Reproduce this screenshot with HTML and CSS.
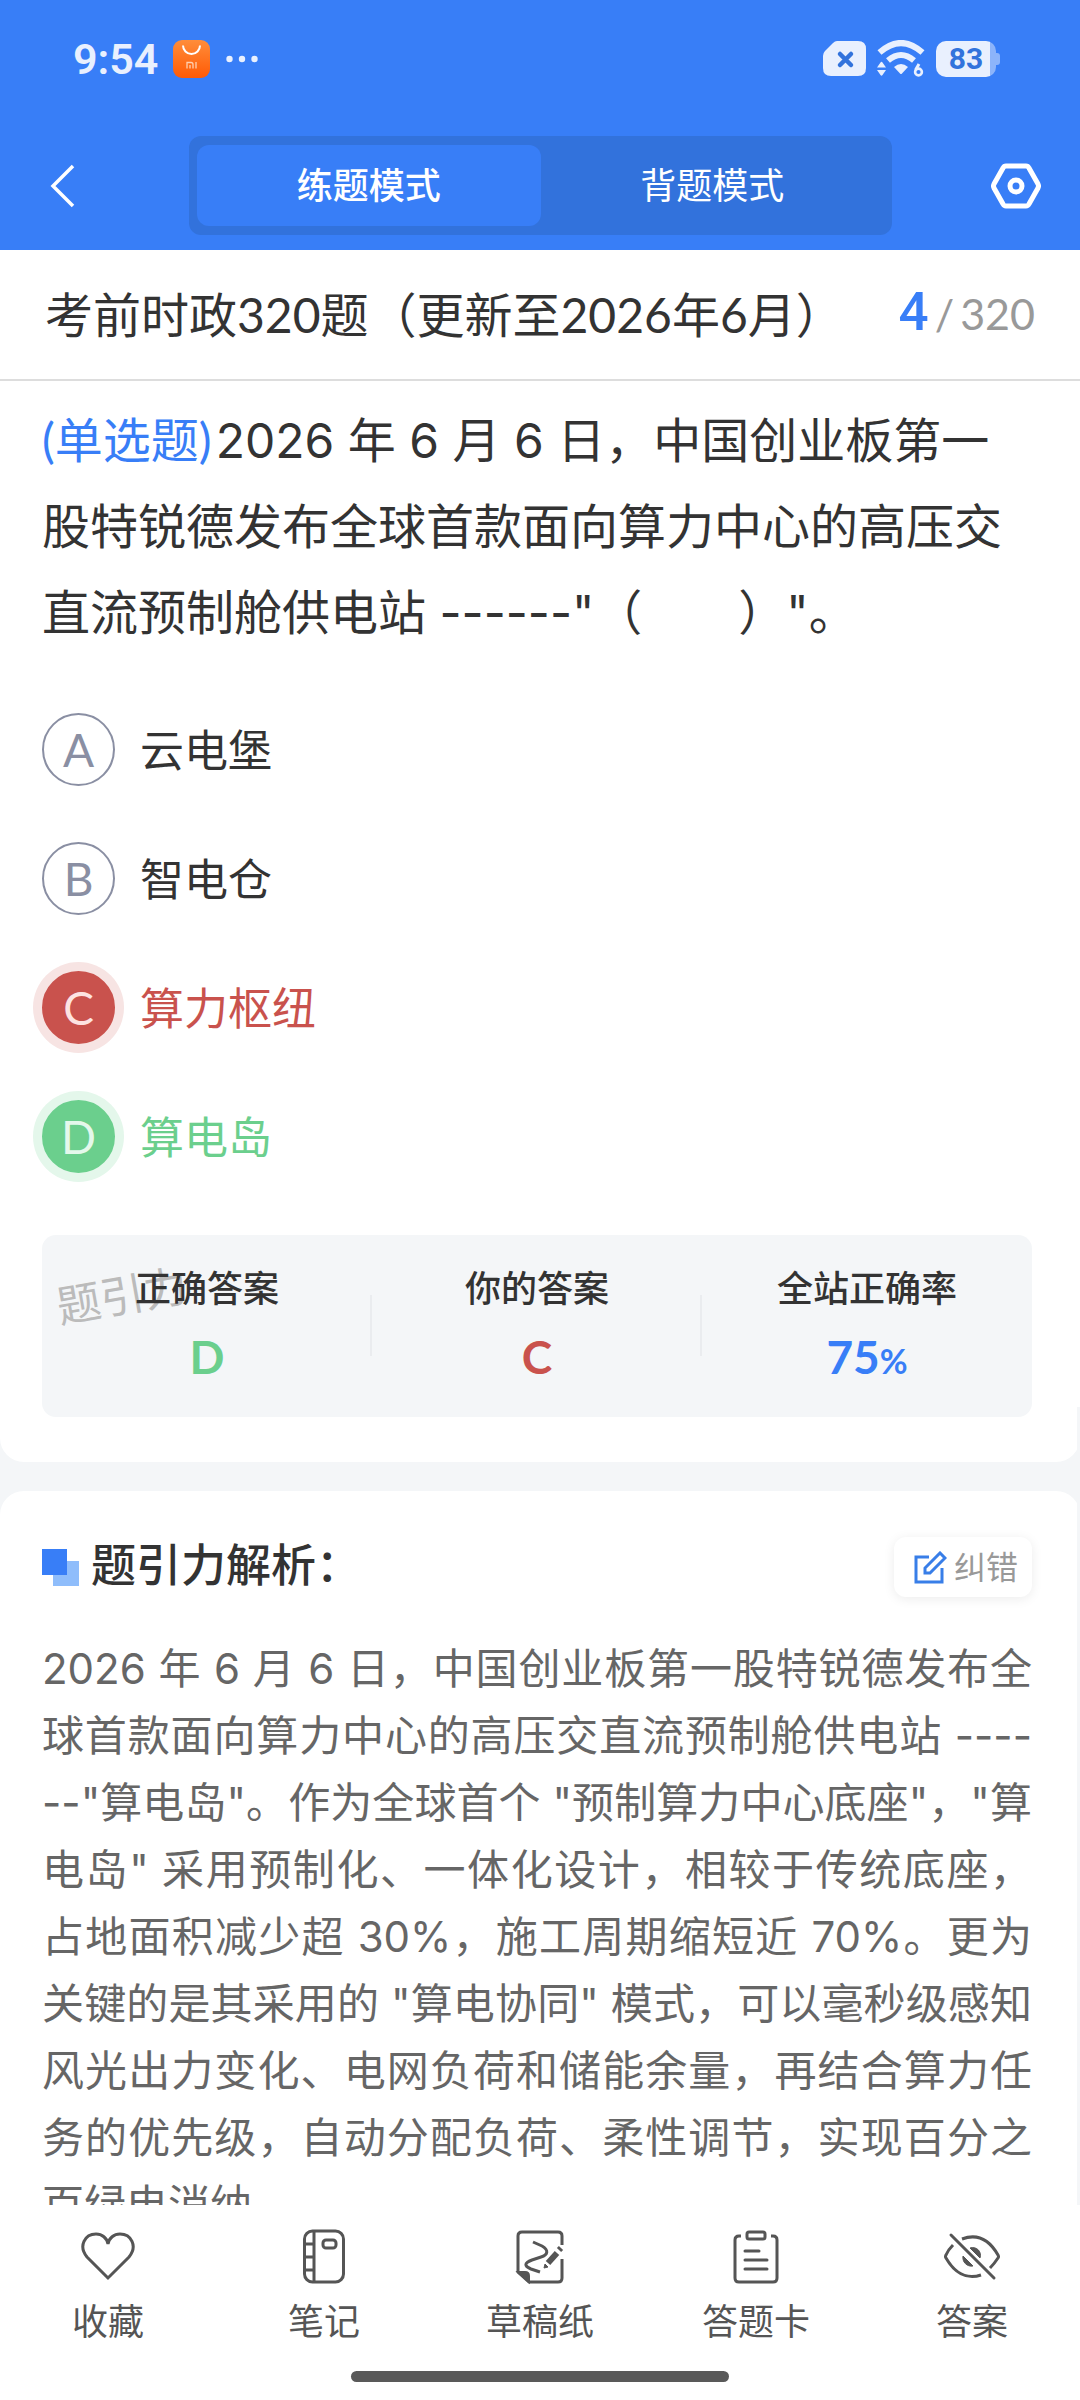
FILE: index.html
```
<!DOCTYPE html>
<html lang="zh-CN">
<head>
<meta charset="UTF-8">
<meta name="viewport" content="width=device-width, initial-scale=1.0">
<title>练题模式</title>
<link rel="stylesheet" href="styles.css">
</head>
<body>

<header class="header">
  <div class="status">
    <span class="clock">9:54</span>
    <svg class="mi-icon" width="37" height="38" viewBox="0 0 37 38">
      <defs>
        <linearGradient id="mi" x1="0" y1="0" x2="0" y2="1">
          <stop offset="0" stop-color="#ff8d3a"/>
          <stop offset="1" stop-color="#ff5a05"/>
        </linearGradient>
      </defs>
      <rect width="37" height="38" rx="9" fill="url(#mi)"/>
      <path d="M10 5.500a8.500 8.500 0 0 0 17 0" fill="none" stroke="#fff" stroke-width="2"/>
      <path d="M14 28.500v-6h4q2 0 2 2v4M17 25v3.500M23 22v6.500" fill="none" stroke="#ffd0b0" stroke-width="1.300"/>
    </svg>
    <svg width="32" height="8" viewBox="0 0 32 8" fill="#e9f0fe">
      <circle cx="3.500" cy="4" r="3.200"/><circle cx="16" cy="4" r="3.200"/><circle cx="28.500" cy="4" r="3.200"/>
    </svg>
    <div class="status-right">
      <svg width="43" height="36" viewBox="0 0 43 36">
        <path d="M14 0h21q8 0 8 8v19q0 8-8 8H8q-8 0-8-8V15q0-3 2-5l8-8q2-2 4-2z" fill="#e9f0fe"/>
        <path d="M17 13l11 11M28 13l-11 11" stroke="#3273dc" stroke-width="4.500" stroke-linecap="round"/>
      </svg>
      <svg width="48" height="38" viewBox="0 0 48 38">
        <g fill="none" stroke="#e9f0fe" stroke-width="6">
          <path d="M2.500 12.500Q24-6.500 45.500 12.500"/>
          <path d="M11 20.500Q24 9.500 37 20.500"/>
        </g>
        <path d="M17 27q7-6 14 0l-6 6.500q-1 1-2 0z" fill="#e9f0fe"/>
        <path d="M0 27.500l3.500-5q1-1.500 2 0l3.500 5zM0 30h9l-3.500 5q-1 1.500-2 0z" fill="#e9f0fe"/>
        <path d="M42 24l-3.500 6" stroke="#e9f0fe" stroke-width="3"/>
        <circle cx="41.500" cy="32" r="3.400" fill="none" stroke="#e9f0fe" stroke-width="2.600"/>
      </svg>
      <div class="battery">83</div>
    </div>
  </div>

  <nav class="nav">
    <button class="icon-btn" aria-label="返回">
      <svg width="26" height="44" viewBox="0 0 26 44" fill="none" stroke="#fff" stroke-width="3.500">
        <path d="M23 2L3 22l20 20"/>
      </svg>
    </button>
    <div class="tabs">
      <button class="tab active">练题模式</button>
      <button class="tab">背题模式</button>
    </div>
    <button class="icon-btn" aria-label="设置">
      <svg width="50" height="46" viewBox="0 0 50 46" fill="none" stroke="#fff" stroke-width="5">
        <path d="M15 3h20q2 0 3 2l9 16q1 2 0 4l-9 16q-1 2-3 2H15q-2 0-3-2L3 25q-1-2 0-4l9-16q1-2 3-2z"/>
        <circle cx="25" cy="23" r="6"/>
      </svg>
    </button>
  </nav>
</header>

<div class="title-bar">
  <h1>考前时政320题（更新至2026年6月）</h1>
  <div class="counter"><b>4</b><i>/</i>320</div>
</div>

<main class="main">
  <section class="question">
    <p class="stem"><span class="kind">(单选题)</span>2026 年 6 月 6 日，中国创业板第一<br>股特锐德发布全球首款面向算力中心的高压交<br>直流预制舱供电站 ------"（&emsp;&emsp;）"。</p>

    <ul class="options">
      <li><button class="option"><span class="letter">A</span>云电堡</button></li>
      <li><button class="option"><span class="letter">B</span>智电仓</button></li>
      <li><button class="option wrong"><span class="letter">C</span>算力枢纽</button></li>
      <li><button class="option right"><span class="letter">D</span>算电岛</button></li>
    </ul>

    <div class="result">
      <span class="watermark">题引力</span>
      <div class="result-item"><span>正确答案</span><b class="green">D</b></div>
      <div class="result-item"><span>你的答案</span><b class="red">C</b></div>
      <div class="result-item"><span>全站正确率</span><b class="blue">75<small>%</small></b></div>
    </div>
  </section>

  <section class="analysis">
    <div class="analysis-head">
      <svg width="37" height="37" viewBox="0 0 37 37">
        <rect x="11" y="12" width="26" height="25" fill="#8fbdfb"/>
        <rect width="25" height="26" fill="#387ef7"/>
      </svg>
      <h2>题引力解析：</h2>
      <button class="report">
        <svg width="33" height="33" viewBox="0 0 33 33" fill="none" stroke="#387ee8" stroke-width="3">
          <path d="M15 6H2v25h26V17"/>
          <path d="M11 22v-5L26 2l5 5-15 15z"/>
        </svg>
        纠错
      </button>
    </div>
    <p class="explain">2026 年 6 月 6 日，中国创业板第一股特锐德发布全<br>球首款面向算力中心的高压交直流预制舱供电站 ----<br>--"算电岛"。作为全球首个 "预制算力中心底座"，"算<br>电岛" 采用预制化、一体化设计，相较于传统底座，<br>占地面积减少超 30%，施工周期缩短近 70%。更为<br>关键的是其采用的 "算电协同" 模式，可以毫秒级感知<br>风光出力变化、电网负荷和储能余量，再结合算力任<br>务的优先级，自动分配负荷、柔性调节，实现百分之</p>
    <p class="explain last">百绿电消纳</p>
  </section>
  <div class="scrollbar"></div>
</main>

<footer class="footer">
  <div class="tools">
    <button class="tool">
      <svg width="56" height="56" viewBox="0 0 56 56">
        <path d="M28 49L7 28C-2 17 5 5 16 5c6 0 11 4 12 10C29 9 34 5 40 5c11 0 18 12 9 23z"/>
      </svg>
      收藏
    </button>
    <button class="tool">
      <svg width="56" height="56" viewBox="0 0 56 56">
        <rect x="8.500" y="2" width="39" height="51" rx="8"/>
        <path d="M18 2v51M8 15h10M8 28h10M8 41h10"/>
        <rect x="27" y="11" width="13" height="8" rx="3"/>
      </svg>
      笔记
    </button>
    <button class="tool">
      <svg width="56" height="56" viewBox="0 0 56 56">
        <path d="M50 16V7q0-4-4-4H10q-4 0-4 4v36l11 10h29q4 0 4-4V30"/>
        <path d="M6 43h7q4 0 4 4v6z" fill="#555" stroke-width="2"/>
        <path d="M21 13l9 4c7 4 6 9-1 11l-9 3c-8 3-8 6-1 9l9 3"/>
        <path d="M36 34l9-10" stroke-width="6"/>
        <path d="M47 21l2-2" stroke-width="6"/>
        <path d="M32 39l1-4 3 3z" fill="#555" stroke-width="1"/>
      </svg>
      草稿纸
    </button>
    <button class="tool">
      <svg width="56" height="56" viewBox="0 0 56 56">
        <path d="M13 7h-2q-4 0-4 4v38q0 4 4 4h34q4 0 4-4V11q0-4-4-4h-2"/>
        <rect x="19" y="3" width="18" height="7" rx="2"/>
        <path d="M17 22h14M17 31h22M17 40h22" stroke-linecap="round"/>
      </svg>
      答题卡
    </button>
    <button class="tool">
      <svg width="60" height="56" viewBox="0 0 60 56">
        <path d="M20 10C36 4 48 12 56 26q1 2 0 3-4 6-8 10M11 16q-5 5-7 10-1 2 0 3C12 43 24 51 39 46"/>
        <path d="M9 6l43 43" stroke-linecap="round"/>
        <path d="M28 19c7-2 12 4 10 10z" fill="#555" stroke-width="1"/>
        <path d="M21 27c-1 6 4 11 10 10z" fill="#555" stroke-width="1"/>
      </svg>
      答案
    </button>
  </div>
  <div class="home-bar"></div>
</footer>

</body>
</html>
```
FILE: styles.css
```
* {
  box-sizing: border-box;
}
body {
  margin: 0;
  height: 100vh;
  display: flex;
  flex-direction: column;
  font-family: Lato, "Noto Sans CJK SC", sans-serif;
  color: #333;
  background: #fff;
}
h1, h2, p, ul {
  margin: 0;
  padding: 0;
  font-weight: 400;
}
button {
  font: inherit;
  color: inherit;
  background: none;
  border: none;
  padding: 0;
  cursor: pointer;
}
svg {
  display: block;
  flex: none;
}

/* header */
.header {
  background: #387ef7;
  color: #fff;
  padding-bottom: 15px;
}
.status {
  display: flex;
  align-items: center;
  height: 118px;
  padding: 0 84px 0 73px;
  color: #e9f0fe;
}
.clock {
  font-family: Roboto, sans-serif;
  font-size: 43px;
  font-weight: 600;
}
.mi-icon {
  margin: 0 16px 0 15px;
}
.status-right {
  margin-left: auto;
  display: flex;
  align-items: center;
  gap: 11px;
}
.battery {
  width: 60px;
  height: 36px;
  border-radius: 10px;
  background: linear-gradient(to right, #e9f0fe 54px, #8cb4fa 54px);
  color: #3273dc;
  font-family: Roboto, sans-serif;
  font-size: 30px;
  font-weight: 700;
  line-height: 36px;
  text-align: center;
  position: relative;
}
.battery::after {
  content: "";
  position: absolute;
  left: 60px;
  top: 12px;
  width: 4px;
  height: 12px;
  border-radius: 0 3px 3px 0;
  background: #8cb4fa;
}
.nav {
  display: flex;
  align-items: center;
  justify-content: space-between;
  height: 99px;
  margin-top: 18px;
  padding: 0 39px 0 50px;
}
.icon-btn {
  width: 50px;
}
.tabs {
  flex: 1;
  display: flex;
  margin: 0 99px 0 89px;
  padding: 9px 8px;
  border-radius: 12px;
  background: #3272dc;
}
.tab {
  flex: 1;
  height: 81px;
  padding-bottom: 5px;
  border-radius: 12px;
  font-size: 36px;
}
.tab.active {
  background: #387ef7;
  font-weight: 500;
}

/* title */
.title-bar {
  display: flex;
  align-items: center;
  justify-content: space-between;
  height: 131px;
  padding: 0 45px 5px;
  border-bottom: 2px solid #ddd;
}
h1 {
  font-size: 48px;
  white-space: nowrap;
}
.counter {
  font-size: 43px;
  color: #999;
}
.counter b {
  font-family: Roboto, sans-serif;
  font-size: 53px;
  font-weight: 500;
  color: #387ef7;
}
.counter i {
  font-style: normal;
  margin: 0 6px;
}

/* question */
.main {
  flex: 1;
  min-height: 0;
  overflow: hidden;
  position: relative;
  background: #f4f6f8;
}
.question,
.analysis {
  background: #fff;
  border-radius: 0 0 24px 24px;
  padding: 16px 48px 45px 42px;
}
.stem {
  font-family: Inter, "Noto Sans CJK SC", sans-serif;
  font-size: 48px;
  line-height: 86px;
  white-space: nowrap;
}
.kind {
  margin-right: 4px;
  font-family: Lato, "Noto Sans CJK SC", sans-serif;
  color: #387ef7;
}
.options {
  list-style: none;
  display: flex;
  flex-direction: column;
  gap: 56px;
  padding: 57px 0 62px;
}
.option {
  display: flex;
  align-items: center;
  gap: 25px;
  height: 73px;
  font-size: 44px;
  line-height: 64px;
}
.letter {
  width: 73px;
  height: 73px;
  border: 2px solid #8a8fa3;
  border-radius: 50%;
  font-size: 46px;
  line-height: 69px;
  text-align: center;
  color: #8a8fa3;
}
.wrong {
  color: #c9524d;
}
.right {
  color: #6bcf8d;
}
.wrong .letter {
  color: #fde3e2;
  border-color: #c9524d;
  background: #c9524d;
  box-shadow: 0 0 0 9px #f7e4e3;
}
.right .letter {
  color: #e4f8eb;
  border-color: #6bcf8d;
  background: #6bcf8d;
  box-shadow: 0 0 0 9px #e4f7eb;
}
.result {
  position: relative;
  display: flex;
  height: 182px;
  border-radius: 14px;
  background: #f4f6f8;
}
.result-item {
  flex: 1;
  position: relative;
  display: flex;
  flex-direction: column;
  align-items: center;
  padding-top: 26px;
  font-size: 36px;
  font-weight: 500;
  line-height: 54px;
}
.result-item + .result-item::before {
  content: "";
  position: absolute;
  left: -2px;
  top: 60px;
  width: 2px;
  height: 61px;
  background: #eaecef;
}
.result-item b {
  font-size: 46px;
  font-weight: 700;
  line-height: 84px;
}
.result-item small {
  font-size: 34px;
}
.green {
  color: #6bcf8d;
}
.red {
  color: #c9524d;
}
.blue {
  color: #387ef7;
}
.watermark {
  position: absolute;
  left: 14px;
  top: 30px;
  font-size: 44px;
  line-height: 60px;
  color: #bbb;
  transform: rotate(-10deg);
}

/* analysis */
.analysis {
  margin-top: 29px;
  border-radius: 24px 24px 0 0;
  padding-top: 46px;
}
.analysis-head {
  display: flex;
  align-items: center;
  gap: 12px;
  height: 60px;
}
h2 {
  font-size: 45px;
  font-weight: 500;
  line-height: 60px;
  padding-bottom: 4px;
}
.report {
  margin-left: auto;
  display: flex;
  align-items: center;
  gap: 7px;
  height: 60px;
  padding: 0 14px 0 20px;
  border-radius: 12px;
  box-shadow: 0 2px 12px rgba(0, 0, 0, 0.08);
  font-size: 32px;
  line-height: 44px;
  color: #999;
}
.explain {
  margin-top: 38px;
  font-family: Inter, "Noto Sans CJK SC", sans-serif;
  font-size: 42px;
  line-height: 67px;
  color: #666;
  text-align: justify;
  text-align-last: justify;
}
.explain.last {
  margin-top: 0;
  text-align-last: left;
}
.scrollbar {
  position: absolute;
  top: 1026px;
  right: 0;
  bottom: 0;
  width: 3px;
  background: #f4f6f8;
}

/* footer */
.footer {
  background: #fff;
  padding: 24px 0 18px;
}
.tools {
  display: flex;
}
.tool {
  flex: 1;
  display: flex;
  flex-direction: column;
  align-items: center;
  gap: 10px;
  font-size: 36px;
  line-height: 52px;
  color: #555;
}
.tool svg {
  fill: none;
  stroke: #555;
  stroke-width: 3;
}
.home-bar {
  width: 35%;
  height: 11px;
  margin: 24px auto 0;
  border-radius: 6px;
  background: #595959;
}
```
